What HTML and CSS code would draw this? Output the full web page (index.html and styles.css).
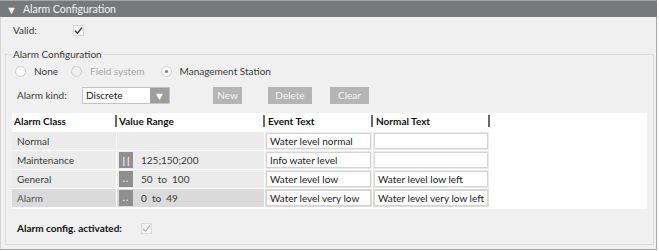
FILE: index.html
```html
<!DOCTYPE html>
<html lang="en">
<head>
    <meta charset="UTF-8">
    <meta name="viewport" content="width=device-width, initial-scale=1.0">
    <title>Alarm Configuration</title>
    <link rel="stylesheet" href="styles.css">
</head>
<body>

    <div class="panel">
        <div class="panel-head">
            <span class="caret">&#9660;</span>
            <span>Alarm Configuration</span>
        </div>

        <div class="valid-row">
            <span class="valid-label">Valid:</span>
            <span class="check">
                <svg width="9" height="9" viewBox="0 0 9 9"><path d="M1 4.8 L3.4 7.2 L8 1.6" fill="none" stroke="#333" stroke-width="1.3"/></svg>
            </span>
        </div>

        <fieldset class="group">
            <legend>Alarm Configuration</legend>

            <div class="radio-row">
                <span class="radio"></span><span class="radio-text">None</span>
                <span class="radio disabled"></span><span class="radio-text muted">Field system</span>
                <span class="radio selected"><span class="dot"></span></span><span class="radio-text">Management Station</span>
            </div>

            <div class="kind-row">
                <span class="kind-label">Alarm kind:</span>
                <div class="select">
                    <span class="select-value">Discrete</span>
                    <span class="select-arrow">&#9660;</span>
                </div>
                <button class="btn btn-new">New</button>
                <button class="btn btn-delete">Delete</button>
                <button class="btn btn-clear">Clear</button>
            </div>

            <div class="table">
                <div class="table-head">
                    <div class="th"><span>Alarm Class</span><span class="sep"></span></div>
                    <div class="th"><span>Value Range</span><span class="sep"></span></div>
                    <div class="th"><span>Event Text</span><span class="sep"></span></div>
                    <div class="th"><span>Normal Text</span><span class="sep"></span></div>
                    <div></div>
                </div>
                <div class="table-body">
                    <div class="td name">Normal</div>
                    <div class="td"></div>
                    <div class="td field"><span class="input">Water level normal</span></div>
                    <div class="td field"><span class="input"></span></div>
                    <div></div>

                    <div class="td name">Maintenance</div>
                    <div class="td range"><span class="range-btn bars">||</span>125;150;200</div>
                    <div class="td field"><span class="input">Info water level</span></div>
                    <div class="td field"><span class="input"></span></div>
                    <div></div>

                    <div class="td name">General</div>
                    <div class="td range"><span class="range-btn dots">..</span>50&nbsp; to&nbsp; 100</div>
                    <div class="td field"><span class="input">Water level low</span></div>
                    <div class="td field"><span class="input">Water level low left</span></div>
                    <div></div>

                    <div class="td name alarm">Alarm</div>
                    <div class="td range alarm"><span class="range-btn dots">..</span>0&nbsp; to&nbsp; 49</div>
                    <div class="td field alarm"><span class="input">Water level very low</span></div>
                    <div class="td field alarm"><span class="input">Water level very low left</span></div>
                    <div></div>
                </div>
            </div>

            <div class="active-row">
                <span class="active-label">Alarm config. activated:</span>
                <span class="check disabled">
                    <svg width="9" height="9" viewBox="0 0 9 9"><path d="M1 4.8 L3.4 7.2 L8 1.6" fill="none" stroke="#b4b4b4" stroke-width="1.2"/></svg>
                </span>
            </div>
        </fieldset>
    </div>

</body>
</html>
```

FILE: styles.css
```css
body {
    margin: 0;
    font-family: Lato, "Liberation Sans", sans-serif;
    font-size: 10px;
    color: #3a3a3a;
    background-color: #fff;
}
.panel {
    width: 657px;
    height: 250px;
    box-sizing: border-box;
    background-color: #f0f0f0;
    border-left: 1px solid #d6d6d6;
    border-right: 1px solid #a8a8a8;
    border-bottom: 1px solid #a8a8a8;
}
.panel-head {
    height: 17px;
    box-sizing: border-box;
    margin-left: -1px;
    margin-right: -1px;
    background-color: #75797c;
    border-top: 1px solid #a2a6a8;
    color: #f4f4f4;
    display: flex;
    align-items: center;
    padding-left: 6px;
    font-size: 10.5px;
}
.caret {
    font-size: 11px;
    margin-right: 6px;
}

/* checkbox */
.check {
    width: 11px;
    height: 11px;
    box-sizing: border-box;
    border: 1px solid #d8d8d8;
    background-color: #f6f6f6;
    display: flex;
    align-items: center;
    justify-content: center;
}
.check.disabled {
    background-color: #f2f2f2;
    border-color: #dadada;
}
.valid-row {
    height: 26px;
    display: flex;
    align-items: center;
    padding-left: 12px;
}
.valid-label {
    width: 60px;
}

/* group */
.group {
    margin: 4px 2px 0 4px;
    padding: 0 6px 7px 6px;
    border: 1px solid #dcdcdc;
}
.group legend {
    padding: 0 1px;
    line-height: 14px;
}
.radio-row {
    height: 20px;
    display: flex;
    align-items: center;
    padding-left: 3px;
}
.radio {
    width: 11px;
    height: 11px;
    box-sizing: border-box;
    border-radius: 50%;
    border: 1px solid #cdcdcd;
    background-color: #fff;
    display: flex;
    align-items: center;
    justify-content: center;
}
.radio.disabled {
    background-color: #f0f0f0;
}
.radio .dot {
    width: 3px;
    height: 3px;
    border-radius: 50%;
    background-color: #7a7a7a;
}
.radio-text {
    margin-left: 8px;
    margin-right: 13px;
}
.radio-text.muted {
    color: #a9a9a9;
    margin-right: 16px;
}

.kind-row {
    margin-top: 5px;
    height: 18px;
    display: flex;
    align-items: center;
    padding-left: 5px;
}
.kind-label {
    width: 65px;
}
.select {
    width: 88px;
    height: 17px;
    box-sizing: border-box;
    border: 1px solid #c4c4c4;
    background-color: #fff;
    display: flex;
    align-items: stretch;
}
.select-value {
    flex: 1;
    padding-left: 3px;
    color: #222;
    display: flex;
    align-items: center;
}
.select-arrow {
    width: 19px;
    background-color: #9d9d9d;
    color: #fff;
    font-size: 11px;
    display: flex;
    align-items: center;
    justify-content: center;
}
.btn {
    height: 17px;
    border: none;
    padding: 0;
    background-color: #b5b5b5;
    color: #f6f6f6;
    font-family: inherit;
    font-size: 10px;
}
.btn-new {
    width: 29px;
    margin-left: 43px;
}
.btn-delete {
    width: 44px;
    margin-left: 26px;
}
.btn-clear {
    width: 39px;
    margin-left: 18px;
}

/* table */
.table {
    margin-top: 9px;
    background-color: #fff;
    padding-bottom: 2px;
}
.table-head,
.table-body {
    display: grid;
    grid-template-columns: 104px 147px 107px 116px 1fr;
    column-gap: 1px;
}
.table-head {
    height: 16px;
    column-gap: 0;
    grid-template-columns: 105px 148px 108px 117px 1fr;
}
.th {
    display: flex;
    align-items: center;
    justify-content: space-between;
    padding-left: 2px;
    font-weight: bold;
    color: #111;
}
.th:nth-child(3),
.th:nth-child(4) {
    padding-left: 3px;
}
.sep {
    width: 2px;
    height: 12px;
    background-color: #6a6a6a;
}
.table-body {
    margin-top: 3px;
    row-gap: 1px;
    grid-auto-rows: 18px;
}
.td {
    background-color: #ebebeb;
    display: flex;
    align-items: center;
}
.td.alarm {
    background-color: #dadada;
}
.td.name {
    padding-left: 5px;
}
.td.name.alarm {
    color: #555;
}
.td.range {
    padding-left: 2px;
}
.range-btn {
    width: 14px;
    height: 16px;
    background-color: #8f8f8f;
    color: #f2f2f2;
    font-size: 9px;
    letter-spacing: 1px;
    display: flex;
    align-items: center;
    justify-content: center;
    margin-right: 8px;
}
.range-btn.bars {
    font-size: 10px;
    font-weight: bold;
    letter-spacing: 2px;
    padding-left: 2px;
    box-sizing: border-box;
}
.range-btn.dots {
    align-items: flex-end;
    padding-bottom: 3px;
    box-sizing: border-box;
    font-weight: bold;
}
.td.field {
    padding: 1px;
    align-items: stretch;
}
.input {
    flex: 1;
    box-sizing: border-box;
    border: 1px solid #d4d4d4;
    background-color: #fff;
    padding-left: 3px;
    display: flex;
    align-items: center;
    color: #222;
    white-space: nowrap;
    overflow: hidden;
}

.active-row {
    margin-top: 10px;
    height: 18px;
    display: flex;
    align-items: center;
    padding-left: 5px;
}
.active-label {
    width: 124px;
    font-weight: bold;
    color: #111;
}
```
